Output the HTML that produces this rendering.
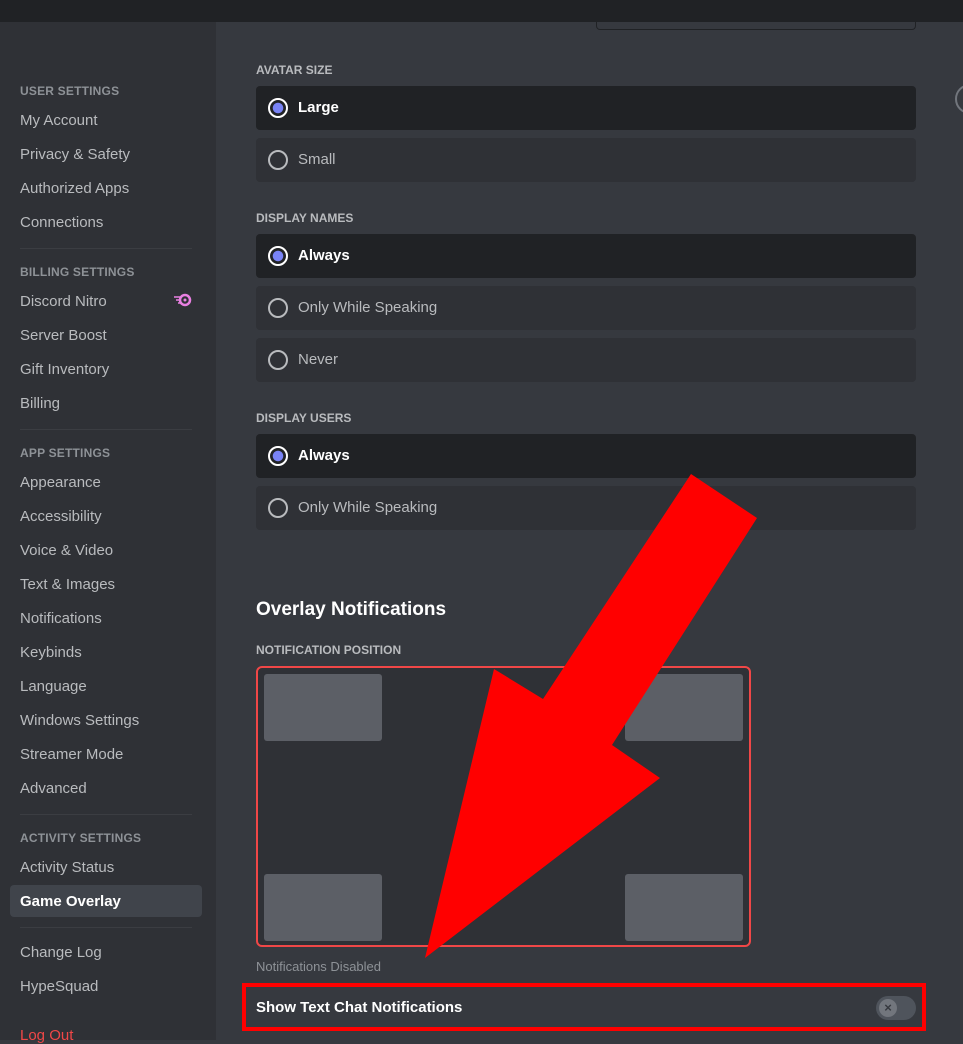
<!DOCTYPE html>
<html><head><meta charset="utf-8"><style>
*{margin:0;padding:0;box-sizing:border-box}
body{width:963px;height:1040px;overflow:hidden;background:#36393f;font-family:"Liberation Sans",sans-serif;position:relative}
.top{position:absolute;left:0;top:0;width:963px;height:22px;background:#202225}
.side{position:absolute;left:0;top:22px;width:216px;height:1018px;background:#2f3136}
.h{position:absolute;left:20px;font-size:12px;font-weight:bold;color:#8e9297;letter-spacing:.2px}
.it{position:absolute;left:20px;font-size:15px;color:#b9bbbe}
.sep{position:absolute;left:20px;width:172px;height:1px;background:#3b3d42}
.sel{position:absolute;left:10px;top:885px;width:192px;height:32px;background:#40444b;border-radius:4px}
.lbl{position:absolute;left:256px;font-size:12px;font-weight:bold;color:#b9bbbe}
.row{position:absolute;left:256px;width:660px;height:44px;border-radius:4px;background:#2f3136;color:#b9bbbe;font-size:15px;line-height:44px;padding-left:42px}
.row.on{background:#202225;color:#fff;font-weight:bold}
.row:before{content:"";position:absolute;left:12px;top:12px;width:20px;height:20px;border:2px solid #b9bbbe;border-radius:50%;box-sizing:border-box}
.row.on:before{border-color:#fff;background:radial-gradient(circle,#7983f5 0 5px,transparent 5.5px)}
.box{position:absolute;background:#5c5f66;border-radius:3px;width:118px;height:67px}
</style></head><body>
<div class="top"></div>
<div style="position:absolute;left:596px;top:22px;width:320px;height:8px;border:1px solid #202225;border-top:none;border-radius:0 0 4px 4px"></div>
<div style="position:absolute;left:955px;top:84px;width:30px;height:30px;border:2px solid #72767d;border-radius:50%"></div>
<div class="side"></div>
<div class="sel"></div>
<div class="h" style="top:84px">USER SETTINGS</div>
<div class="it" style="top:112px">My Account</div>
<div class="it" style="top:146px">Privacy &amp; Safety</div>
<div class="it" style="top:180px">Authorized Apps</div>
<div class="it" style="top:214px">Connections</div>
<div class="sep" style="top:248px"></div>
<div class="h" style="top:265px">BILLING SETTINGS</div>
<div class="it" style="top:293px">Discord Nitro</div>
<svg style="position:absolute;left:173px;top:293px" width="20" height="14" viewBox="0 0 20 14"><circle cx="12" cy="7" r="5" fill="none" stroke="#e980e2" stroke-width="2.5"/><circle cx="12" cy="7" r="1.5" fill="#e980e2"/><path d="M1 4h6M3 7h4M5 10h3" stroke="#e980e2" stroke-width="1.5"/></svg>
<div class="it" style="top:327px">Server Boost</div>
<div class="it" style="top:361px">Gift Inventory</div>
<div class="it" style="top:395px">Billing</div>
<div class="sep" style="top:429px"></div>
<div class="h" style="top:446px">APP SETTINGS</div>
<div class="it" style="top:474px">Appearance</div>
<div class="it" style="top:508px">Accessibility</div>
<div class="it" style="top:542px">Voice &amp; Video</div>
<div class="it" style="top:576px">Text &amp; Images</div>
<div class="it" style="top:610px">Notifications</div>
<div class="it" style="top:644px">Keybinds</div>
<div class="it" style="top:678px">Language</div>
<div class="it" style="top:712px">Windows Settings</div>
<div class="it" style="top:746px">Streamer Mode</div>
<div class="it" style="top:780px">Advanced</div>
<div class="sep" style="top:814px"></div>
<div class="h" style="top:831px">ACTIVITY SETTINGS</div>
<div class="it" style="top:859px">Activity Status</div>
<div class="it" style="top:893px;color:#fff;font-weight:bold">Game Overlay</div>
<div class="sep" style="top:927px"></div>
<div class="it" style="top:944px">Change Log</div>
<div class="it" style="top:978px">HypeSquad</div>
<div class="it" style="top:1027px;color:#f04747">Log Out</div>

<div class="lbl" style="top:63px">AVATAR SIZE</div>
<div class="row on" style="top:86px">Large</div>
<div class="row" style="top:138px">Small</div>
<div class="lbl" style="top:211px">DISPLAY NAMES</div>
<div class="row on" style="top:234px">Always</div>
<div class="row" style="top:286px">Only While Speaking</div>
<div class="row" style="top:338px">Never</div>
<div class="lbl" style="top:411px">DISPLAY USERS</div>
<div class="row on" style="top:434px">Always</div>
<div class="row" style="top:486px">Only While Speaking</div>
<div style="position:absolute;left:256px;top:599px;font-size:19px;font-weight:bold;color:#fff">Overlay Notifications</div>
<div class="lbl" style="top:643px">NOTIFICATION POSITION</div>
<div style="position:absolute;left:256px;top:666px;width:495px;height:281px;border:2px solid #f04747;border-radius:6px;background:#2f3136"></div>
<div class="box" style="left:264px;top:674px"></div>
<div class="box" style="left:625px;top:674px"></div>
<div class="box" style="left:264px;top:874px"></div>
<div class="box" style="left:625px;top:874px"></div>
<div style="position:absolute;left:256px;top:959px;font-size:13px;color:#8e9297">Notifications Disabled</div>
<div style="position:absolute;left:242px;top:983px;width:684px;height:48px;border:4px solid #ff0000"></div>
<div style="position:absolute;left:256px;top:999px;font-size:15px;font-weight:bold;color:#fff">Show Text Chat Notifications</div>
<div style="position:absolute;left:876px;top:996px;width:40px;height:24px;border-radius:12px;background:#4f545c"></div>
<div style="position:absolute;left:879px;top:999px;width:18px;height:18px;border-radius:50%;background:#72767d;color:#36393f;font-size:13px;line-height:18px;text-align:center;font-weight:bold">×</div>
<svg style="position:absolute;left:0;top:0" width="963" height="1040"><polygon points="691,474 757,518 612,745 660,778 425,958 494,669 543,699" fill="#ff0000"/></svg>
</body></html>
